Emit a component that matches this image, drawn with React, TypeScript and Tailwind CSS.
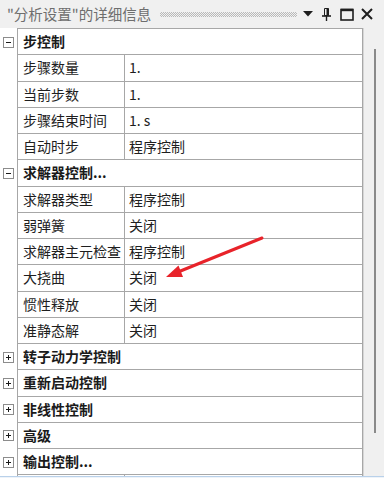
import React from "react";

type Prop = { name: string; value: string };
type Section = { title: string; open: boolean; props: Prop[] };

const sections: Section[] = [
  {
    title: "步控制",
    open: true,
    props: [
      { name: "步骤数量", value: "1." },
      { name: "当前步数", value: "1." },
      { name: "步骤结束时间", value: "1. s" },
      { name: "自动时步", value: "程序控制" },
    ],
  },
  {
    title: "求解器控制...",
    open: true,
    props: [
      { name: "求解器类型", value: "程序控制" },
      { name: "弱弹簧", value: "关闭" },
      { name: "求解器主元检查", value: "程序控制" },
      { name: "大挠曲", value: "关闭" },
      { name: "惯性释放", value: "关闭" },
      { name: "准静态解", value: "关闭" },
    ],
  },
  { title: "转子动力学控制", open: false, props: [] },
  { title: "重新启动控制", open: false, props: [] },
  { title: "非线性控制", open: false, props: [] },
  { title: "高级", open: false, props: [] },
  { title: "输出控制...", open: false, props: [] },
];

function Toggle({ open }: { open: boolean }) {
  return (
    <div className="relative w-[11px] h-[11px] border border-[#8c8c8c] bg-white">
      <div className="absolute left-[2px] top-[4px] w-[5px] h-px bg-[#1a1a1a]" />
      {!open && <div className="absolute left-[4px] top-[2px] w-px h-[5px] bg-[#1a1a1a]" />}
    </div>
  );
}

function CategoryRow({ title, open }: { title: string; open: boolean }) {
  return (
    <div className="flex h-[26.25px] shrink-0">
      <div className="w-[17px] flex items-center pl-[3px] bg-white">
        <Toggle open={open} />
      </div>
      <div className="w-[346px] border-l border-r border-b border-[#a7a7a7] flex items-center pl-[5px] font-bold text-[14px] text-[#1a1a1a]">
        {title}
      </div>
    </div>
  );
}

function PropRow({ name, value }: Prop) {
  return (
    <div className="flex h-[26.25px] shrink-0">
      <div className="w-[17px] bg-white" />
      <div className="w-[346px] border-l border-r border-b border-[#a7a7a7] flex text-[14px] text-[#1e1e1e]">
        <div className="w-[107px] border-r border-[#a7a7a7] flex items-center pl-[5px] whitespace-nowrap">{name}</div>
        <div className="flex-1 flex items-center pl-[4px] whitespace-nowrap">{value}</div>
      </div>
    </div>
  );
}

export default function App() {
  return (
    <div className="relative w-[384px] h-[478px] overflow-hidden bg-[#f0f0f0] font-['Noto_Sans_CJK_SC',sans-serif] flex flex-col">
      {/* Title bar */}
      <div className="h-[28px] shrink-0 flex items-center pl-[7px] pr-[11px]">
        <span className="w-[145px] text-[14.5px] text-[#6e6e6e] whitespace-nowrap leading-none">"分析设置"的详细信息</span>
        <div className="ml-[8px] w-[137px] h-[5px] bg-[conic-gradient(#b8b8b8_25%,transparent_0_50%,#b8b8b8_0_75%,transparent_0)] bg-[length:2px_2px]" />
        <div className="ml-[6px] flex items-center">
          <svg width="10" height="6" viewBox="0 0 10 6">
            <path d="M0 0 H10 L5 5.5 Z" fill="#1e1e1e" />
          </svg>
          <svg className="ml-[9px]" width="9" height="13" viewBox="0 0 9 13">
            <path d="M2.5 0.5 H6.5 V7.5 H2.5 Z" fill="none" stroke="#1e1e1e" strokeWidth="1" />
            <path d="M5.5 0.5 V7.5" stroke="#1e1e1e" strokeWidth="2" />
            <path d="M0 8 H9" stroke="#1e1e1e" strokeWidth="1.6" />
            <path d="M4.5 8 V13" stroke="#1e1e1e" strokeWidth="1.4" />
          </svg>
          <svg className="ml-[9px]" width="14" height="13" viewBox="0 0 14 13">
            <rect x="1" y="1.5" width="12" height="10.5" fill="none" stroke="#1e1e1e" strokeWidth="1.6" />
            <path d="M1 2 H13" stroke="#1e1e1e" strokeWidth="2.4" />
          </svg>
          <svg className="ml-[7px]" width="12" height="12" viewBox="0 0 12 12">
            <path d="M1 1 L11 11 M11 1 L1 11" stroke="#1e1e1e" strokeWidth="2" />
          </svg>
        </div>
      </div>

      {/* Body */}
      <div className="flex-1 flex min-h-0">
        <div className="w-[364px] bg-white flex">
          <div className="w-[363px] flex flex-col overflow-hidden">
            <div className="flex shrink-0 h-px">
              <div className="w-[17px] bg-white" />
              <div className="w-[346px] bg-[#a7a7a7]" />
            </div>
            {sections.map((s) => (
              <React.Fragment key={s.title}>
                <CategoryRow title={s.title} open={s.open} />
                {s.props.map((p) => (
                  <PropRow key={p.name} {...p} />
                ))}
              </React.Fragment>
            ))}
            <PropRow name="" value="" />
          </div>
          <div className="w-px bg-[#d6d6d6]" />
        </div>
        <div className="flex-1 flex justify-center pl-[1px]">
          <div className="mt-[21px] w-[2px] h-[384px] bg-[#8a8a8a]" />
        </div>
      </div>
      <div className="h-px shrink-0 bg-[#b9d1ea]" />
      <div className="h-px shrink-0 bg-[#eef3f9]" />

      {/* Red annotation arrow */}
      <svg className="absolute left-0 top-0 pointer-events-none" width="384" height="478" viewBox="0 0 384 478">
        <path d="M262 238 L178 272" stroke="#e8232a" strokeWidth="3" strokeLinecap="round" />
        <path d="M166 277 L178.5 265.5 L183 277 Z" fill="#e8232a" />
      </svg>
    </div>
  );
}
